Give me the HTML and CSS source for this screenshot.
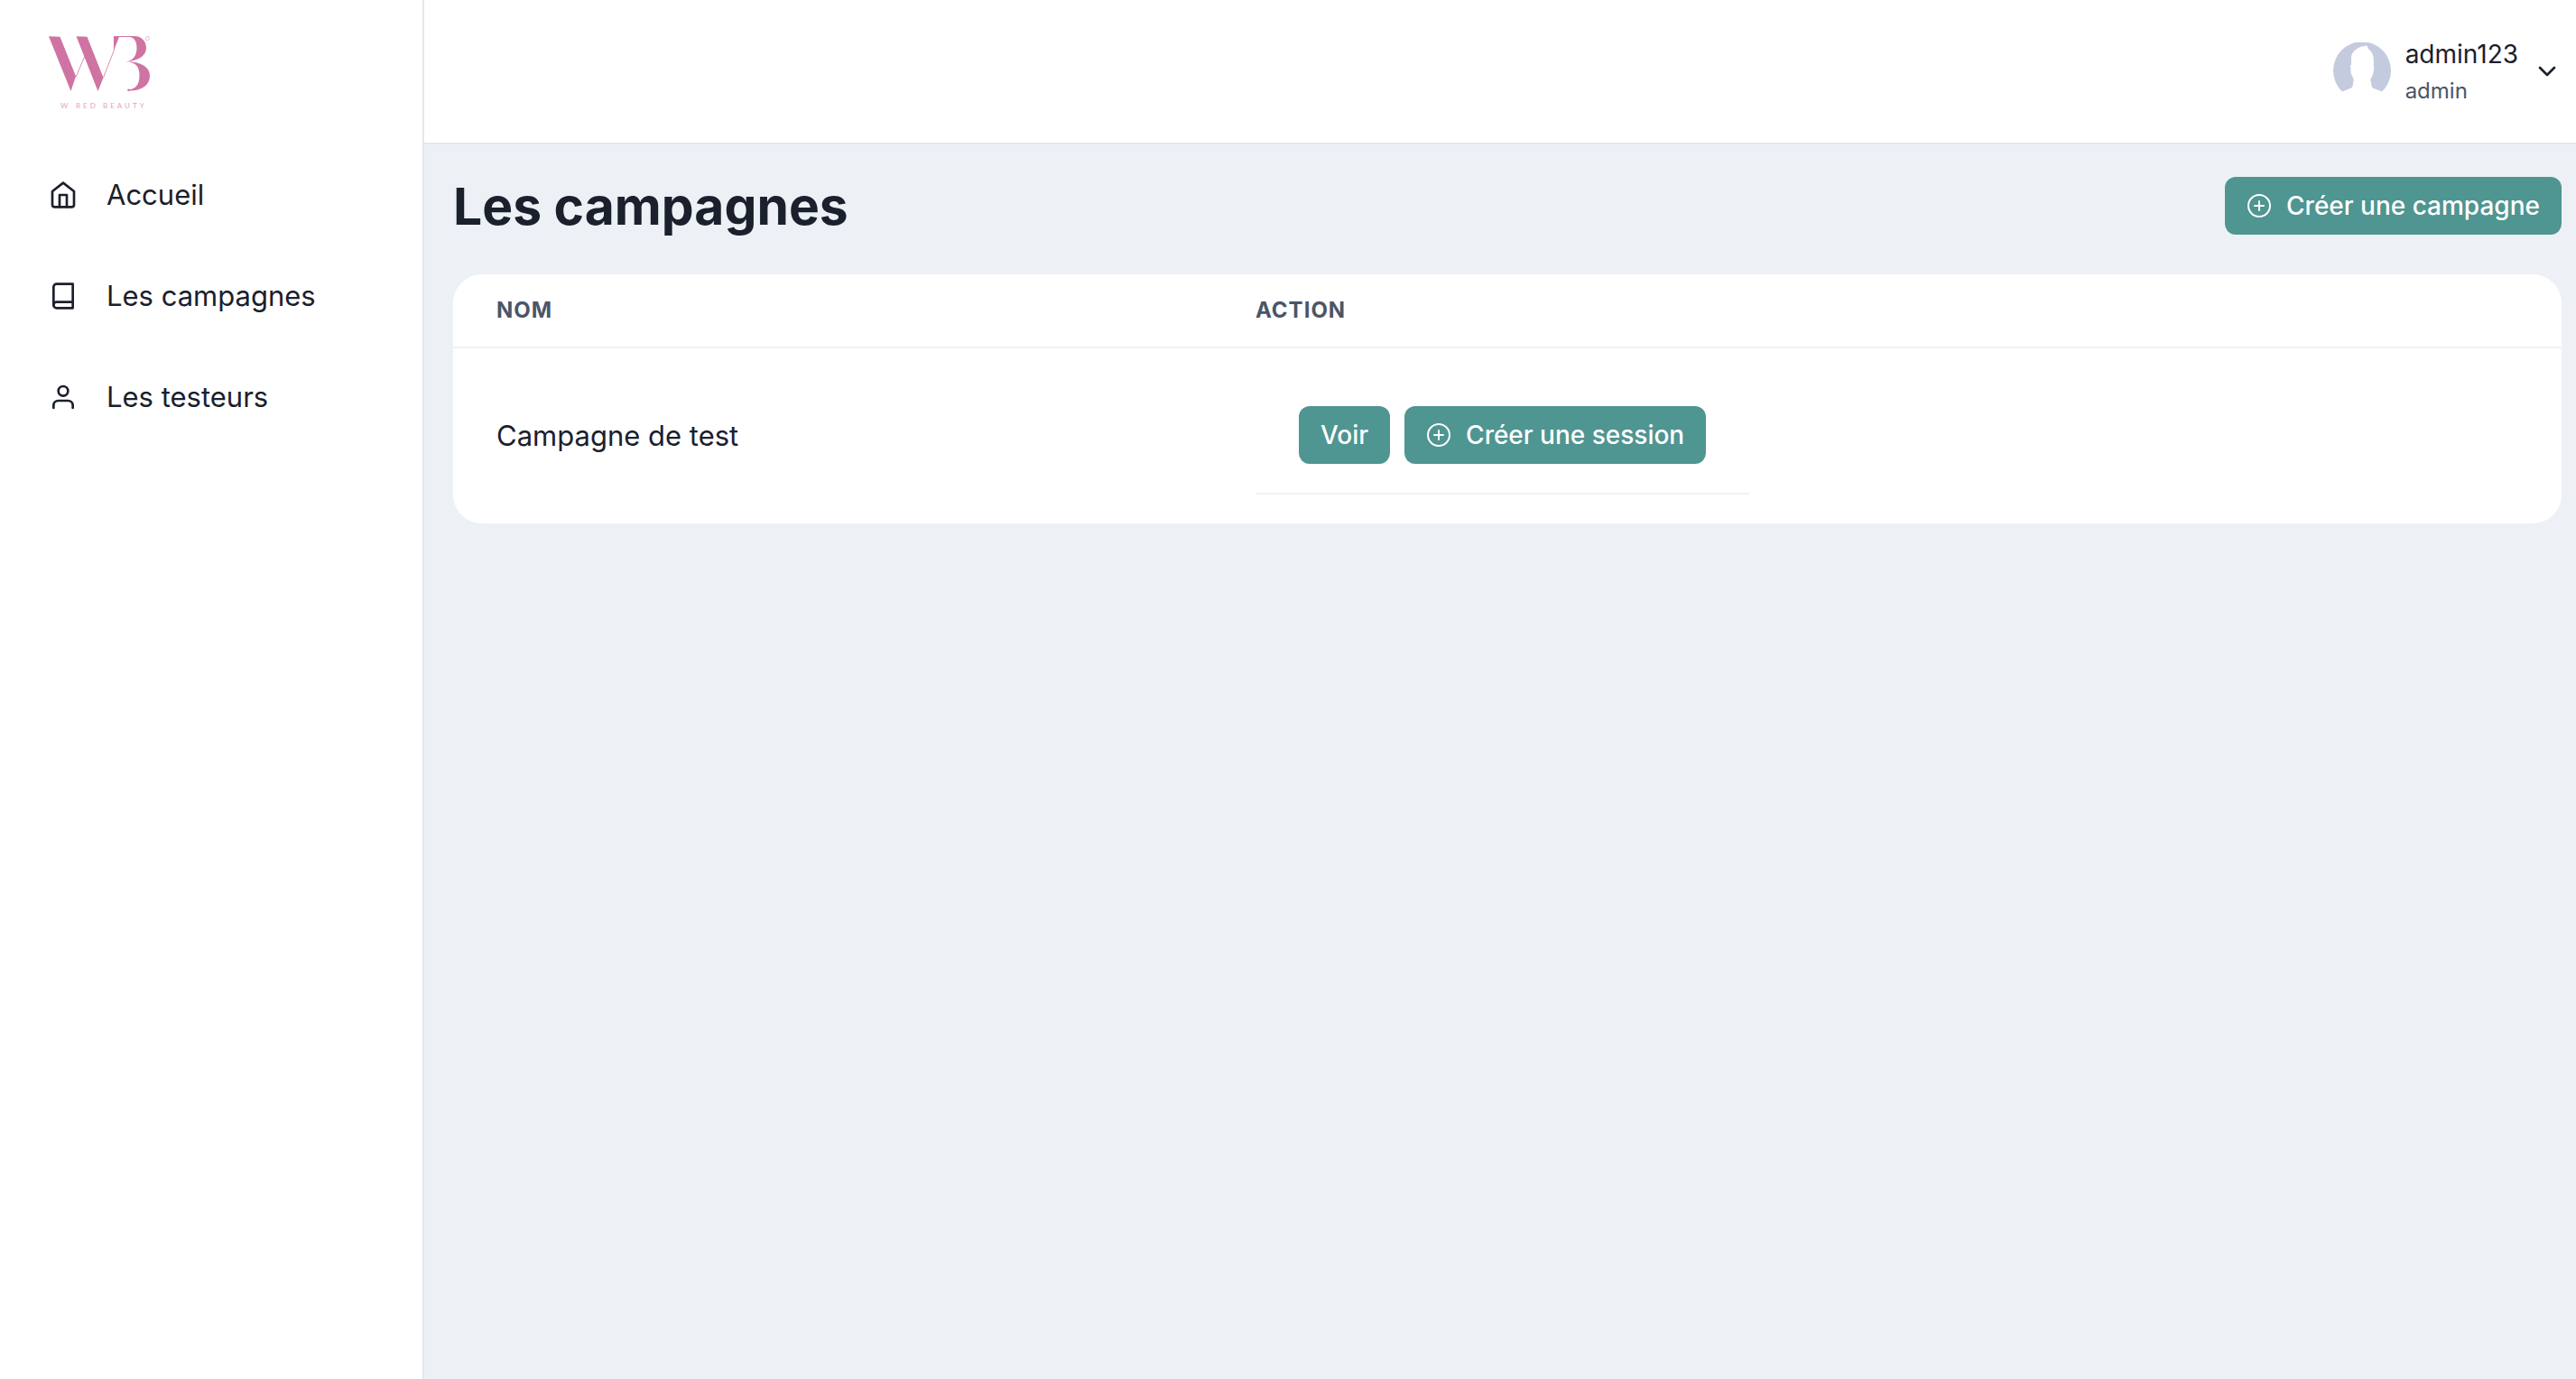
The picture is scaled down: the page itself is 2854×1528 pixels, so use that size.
FILE: index.html
```html
<!DOCTYPE html>
<html lang="fr">
<head>
<meta charset="utf-8">
<meta name="viewport" content="width=device-width, initial-scale=1">
<title>Les campagnes</title>
<link rel="stylesheet" href="styles.css">
</head>
<body>
<svg class="sprite" aria-hidden="true">
  <symbol id="plus-circle" viewBox="0 0 28 28">
    <circle cx="14" cy="14" r="12" fill="none" stroke="currentColor" stroke-width="2"/>
    <path d="M14 9v10M9 14h10" fill="none" stroke="currentColor" stroke-width="2" stroke-linecap="round"/>
  </symbol>
</svg>
<div class="app">
  <aside class="sidebar">
    <a class="brand" href="#" aria-label="W Red Beauty">
      <svg class="logo" viewBox="0 0 120 92">
        <g fill="#cf73a3">
          <path d="M4 10.200L16.500 10.800L34 54.500 28.500 71Z"/>
          <path d="M34.500 10.200L46.500 10.800L64.500 56 58.500 71Z"/>
          <path d="M76 10H99C107 10 112 16 112 23C112 31 105 37 90 38.500C98 37 101.500 31 101.500 23C101.500 15 98 11 93 11H82L76 26Z"/>
          <path d="M90 38.500C106 38 116 44 116 54C116 65 106 71 92 70.500V69.500C100 69 104.500 64 104.500 54C104.500 44 101 39 90 38.500Z"/>
          <circle cx="92.500" cy="69.800" r="1.300"/>
        </g>
        <path d="M34 55.500L43.500 33M64.500 56L77 24" fill="none" stroke="#cf73a3" stroke-width="0.800"/>
        <circle cx="113.500" cy="12.500" r="2" fill="none" stroke="#e3a9c8" stroke-width="0.800"/>
        <g class="logo-text">
          <text x="17" y="90">W</text>
          <text x="34" y="90">RED</text>
          <text x="64" y="90">BEAUTY</text>
        </g>
      </svg>
    </a>
    <nav class="nav">
      <a class="nav-item" href="#">
        <svg class="nav-icon" viewBox="0 0 24 24"><path d="M3 9l9-7 9 7v11a2 2 0 0 1-2 2H5a2 2 0 0 1-2-2z"/><path d="M9 22V12h6v10"/></svg>
        Accueil
      </a>
      <a class="nav-item" href="#">
        <svg class="nav-icon" viewBox="0 0 24 24"><path d="M4 19.500A2.500 2.500 0 0 1 6.500 17H20"/><path d="M6.500 2H20v20H6.500A2.500 2.500 0 0 1 4 19.500v-15A2.500 2.500 0 0 1 6.500 2z"/></svg>
        Les campagnes
      </a>
      <a class="nav-item" href="#">
        <svg class="nav-icon" viewBox="0 0 24 24"><path d="M20 21v-2a4 4 0 0 0-4-4H8a4 4 0 0 0-4 4v2"/><circle cx="12" cy="7" r="4"/></svg>
        Les testeurs
      </a>
    </nav>
  </aside>
  <div class="content">
    <header class="topbar">
      <button class="account" type="button">
        <svg class="avatar" viewBox="0 0 64 64">
          <path d="M10 54.500A32 32 0 1 1 54 54.500L44 50.500C41.500 48.500 43 46 41.500 43C41 39 44.500 37 44.500 33L45.500 26H44.500C45 24 45 20 44.500 16C43.500 11 41 9 38.500 6.500L37.500 3.500C28 4 20.500 10 20 16V25H19L19.500 33C20 37 23.500 39 22.500 43C21.500 46 22.500 48.500 20 50.500Z" fill="#c5cbde"/>
        </svg>
        <span class="account-text">
          <span class="account-name">admin123</span>
          <span class="account-role">admin</span>
        </span>
        <svg class="chevron" viewBox="0 0 24 24"><path d="M6 9l6 6 6-6"/></svg>
      </button>
    </header>
    <main class="page">
      <div class="page-head">
        <h1>Les campagnes</h1>
        <button class="btn" type="button"><svg class="btn-icon"><use href="#plus-circle"/></svg>Créer une campagne</button>
      </div>
      <div class="card">
        <table class="table">
          <thead>
            <tr><th scope="col">Nom</th><th scope="col">Action</th></tr>
          </thead>
          <tbody>
            <tr>
              <td>Campagne de test</td>
              <td>
                <div class="actions">
                  <button class="btn" type="button">Voir</button>
                  <button class="btn" type="button"><svg class="btn-icon"><use href="#plus-circle"/></svg>Créer une session</button>
                </div>
              </td>
            </tr>
          </tbody>
        </table>
      </div>
    </main>
  </div>
</div>
</body>
</html>
```
FILE: styles.css
```css
*, *::before, *::after { box-sizing: border-box; }

body {
  margin: 0;
  background: #edf1f6;
  color: #1a202c;
  font-family: Inter, "Liberation Sans", sans-serif;
  font-size: 31px;
  line-height: 48px;
}

button { font: inherit; color: inherit; border: 0; cursor: pointer; }

.sprite { display: none; }

.app { display: flex; min-height: 100vh; }

/* Sidebar */
.sidebar {
  flex: none;
  width: 470px;
  background: #fff;
  border-right: 2px solid #e2e8f0;
}
.brand { display: flex; height: 160px; padding: 30px 50px 0; }
.logo { width: 120px; height: 92px; overflow: visible; }
.logo-text {
  fill: #e0a3c3;
  font-family: Lato, sans-serif;
  font-size: 8px;
  letter-spacing: 3px;
}
.nav-item {
  display: flex;
  align-items: center;
  gap: 32px;
  padding: 32px 54px;
  color: inherit;
  text-decoration: none;
}
.nav-icon {
  width: 32px;
  height: 32px;
  fill: none;
  stroke: currentColor;
  stroke-width: 2;
  stroke-linecap: round;
  stroke-linejoin: round;
}

/* Top bar */
.content { flex: 1; min-width: 0; }
.topbar {
  display: flex;
  justify-content: flex-end;
  align-items: center;
  height: 160px;
  padding: 0 16px;
  background: #fff;
  border-bottom: 2px solid #e2e8f0;
}
.account {
  display: flex;
  align-items: center;
  gap: 16px;
  padding: 0;
  background: none;
  text-align: left;
}
.avatar { width: 64px; height: 64px; }
.account-text { display: flex; flex-direction: column; padding-top: 2px; }
.account-name { font-size: 28px; line-height: 42px; }
.account-role { font-size: 24px; line-height: 40px; color: #4a5568; }
.chevron {
  width: 32px;
  height: 32px;
  fill: none;
  stroke: currentColor;
  stroke-width: 2;
  stroke-linecap: round;
  stroke-linejoin: round;
}

/* Page */
.page { padding: 32px 16px 32px 32px; }
.page-head {
  display: flex;
  justify-content: space-between;
  align-items: flex-start;
  padding-top: 4px;
  height: 112px;
}
h1 { margin: 0; font-size: 57px; line-height: 66px; font-weight: 700; }

.btn {
  display: inline-flex;
  align-items: center;
  gap: 16px;
  height: 64px;
  padding: 0 24px;
  border-radius: 12px;
  background: #4f9592;
  color: #fff;
  font-size: 28px;
  font-weight: 550;
  white-space: nowrap;
}
.btn-icon { width: 28px; height: 28px; }

.card { background: #fff; border-radius: 32px; overflow: hidden; }
.table { width: 100%; border-spacing: 0; table-layout: fixed; }
.table th {
  padding: 24px 48px;
  border-bottom: 2px solid #edf2f7;
  color: #4a5568;
  font-size: 24px;
  line-height: 32px;
  font-weight: 700;
  letter-spacing: 1px;
  text-align: left;
  text-transform: uppercase;
}
.table th:first-child { width: 36%; }
.table td { padding: 32px 48px; vertical-align: middle; }
.actions {
  display: inline-flex;
  gap: 16px;
  padding: 32px 48px;
  border-bottom: 2px solid #edf2f7;
  vertical-align: top;
}
```
